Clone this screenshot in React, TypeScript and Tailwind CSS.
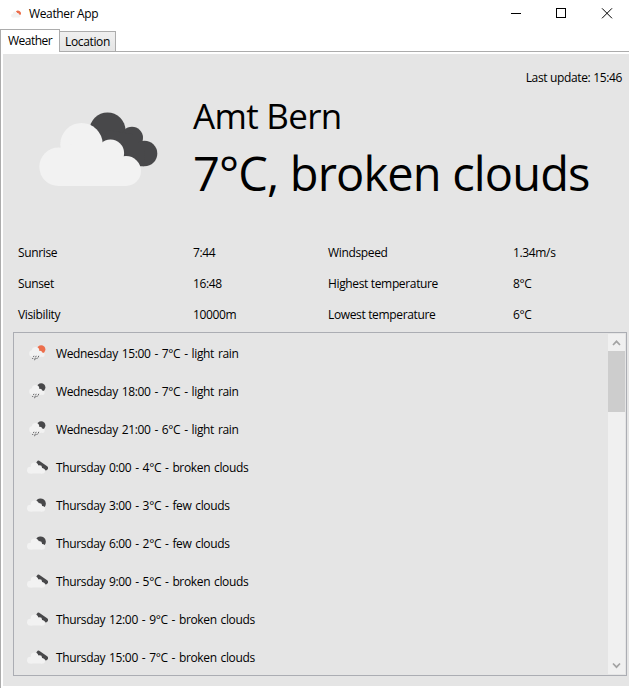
import type { ReactNode } from "react";

const LIGHT = "#f2f2f2";
const DARK = "#48484a";
const ORANGE = "#ec6e4c";

function LightCloud() {
  return (
    <g fill={LIGHT}>
      <circle cx="58.5" cy="166.8" r="19.2" />
      <circle cx="81.5" cy="144.2" r="21.2" />
      <circle cx="110.5" cy="153" r="13.6" />
      <circle cx="126" cy="171" r="15" />
      <path d="M58 186V150L81 140L110 150L126 160V186Z" />
    </g>
  );
}

function BrokenClouds({ className }: { className: string }) {
  return (
    <svg className={className} viewBox="39 111 119 76">
      <g fill={DARK}>
        <circle cx="107.5" cy="130.5" r="18" />
        <circle cx="132" cy="137.7" r="11" />
        <circle cx="144.5" cy="153.5" r="12.8" />
        <path d="M107 130L132 134L145 150L144 166.3H120L100 146Z" />
      </g>
      <LightCloud />
    </svg>
  );
}

function SmallBrokenClouds() {
  return (
    <svg className="h-[14px] w-[21px]" viewBox="39 111 119 76">
      <path d="M105 126L146 155" stroke={DARK} strokeWidth="25" strokeLinecap="round" />
      <LightCloud />
    </svg>
  );
}

function FewClouds({ className, color }: { className: string; color: string }) {
  return (
    <svg className={className} viewBox="39 111 119 76">
      <path d="M92 123A25 25 0 1 1 139 161L125 154L107 137Z" fill={color} />
      <LightCloud />
    </svg>
  );
}

function Rain({ color }: { color: string }) {
  return (
    <svg className="h-[17px] w-[17px]" viewBox="0 0 17 17">
      <circle cx="12.2" cy="4.5" r="4.2" fill={color} />
      <g fill={LIGHT}>
        <circle cx="3.5" cy="8.5" r="3.3" />
        <circle cx="6.6" cy="5.8" r="3.7" />
        <circle cx="11" cy="8" r="2.2" />
        <circle cx="13.5" cy="9.8" r="2.2" />
        <path d="M3 6.5H12V11.9H3Z" />
      </g>
      <path
        d="M5 10.8L4.4 12M7.2 10.8L6.7 12M9.8 10.8L9.2 12.4M4 13L3.4 14M6.4 12.7L5.6 15.2M8.3 12.8L7.7 14"
        stroke="#555557"
        strokeWidth="0.9"
      />
    </svg>
  );
}

const stats = [
  ["Sunrise", "7:44", "Windspeed", "1.34m/s"],
  ["Sunset", "16:48", "Highest temperature", "8°C"],
  ["Visibility", "10000m", "Lowest temperature", "6°C"],
];

const broken = <SmallBrokenClouds />;
const few = <FewClouds className="h-[14px] w-[21px]" color={DARK} />;

const forecast: [ReactNode, string][] = [
  [<Rain color={ORANGE} />, "Wednesday 15:00 - 7°C - light rain"],
  [<Rain color={DARK} />, "Wednesday 18:00 - 7°C - light rain"],
  [<Rain color={DARK} />, "Wednesday 21:00 - 6°C - light rain"],
  [broken, "Thursday 0:00 - 4°C - broken clouds"],
  [few, "Thursday 3:00 - 3°C - few clouds"],
  [few, "Thursday 6:00 - 2°C - few clouds"],
  [broken, "Thursday 9:00 - 5°C - broken clouds"],
  [broken, "Thursday 12:00 - 9°C - broken clouds"],
  [broken, "Thursday 15:00 - 7°C - broken clouds"],
];

export default function App() {
  return (
    <div className="flex h-[688px] w-[629px] flex-col overflow-hidden whitespace-nowrap bg-white font-['Open_Sans','Noto_Sans',sans-serif] text-[12px] leading-[16px] tracking-[-0.35px] text-black">
      <header className="flex h-[29px] shrink-0 items-center pb-[2px] pl-[11px]">
        <FewClouds className="h-[8px] w-[11px]" color={ORANGE} />
        <span className="ml-[7px] flex-1">Weather App</span>
        <svg className="h-[11px] w-[102px] shrink-0" viewBox="0 0 102 11" fill="none" stroke="#000">
          <path d="M0 5.5H10M45.5 .5H54.5V9.5H45.5Z" shapeRendering="crispEdges" />
          <path d="M91 .3L101 10.3M101 .3L91 10.3" />
        </svg>
        <div className="w-[16px] shrink-0" />
      </header>

      <nav className="flex h-[23px] shrink-0 items-end">
        <div className="h-[23px] w-[60px] border-x border-t border-[#acacac] pl-[7px] pt-[3px] tracking-[-0.5px]">Weather</div>
        <div className="h-[21px] w-[56px] border-y border-r border-[#acacac] bg-gradient-to-b from-[#f0f0f0] to-[#e5e5e5] pl-[5px] pt-[2px]">
          Location
        </div>
        <div className="h-px flex-1 bg-[#acacac]" />
      </nav>

      <main className="flex flex-1 flex-col border-l border-[#acacac] pb-[2px] pl-[2px] pt-[2px]">
        <div className="flex flex-1 flex-col bg-[#e5e5e5] pl-[10px]">
          <div className="flex h-[46px] shrink-0 justify-end pr-[7px] pt-[16px]">Last update: 15:46</div>
          <section className="flex h-[137px] shrink-0">
            <div className="w-[180px] shrink-0 pl-[26px] pt-[11px]">
              <BrokenClouds className="h-[76px] w-[119px]" />
            </div>
            <div>
              <h1 className="h-[48px] text-[35px] leading-[32px] tracking-[-0.7px]">Amt Bern</h1>
              <p className="text-[47px] leading-[50px] tracking-[-0.85px]">7°C, broken clouds</p>
            </div>
          </section>

          <section className="grid h-[95px] shrink-0 grid-cols-[175px_135px_185px_1fr] grid-rows-[31px_31px_31px] items-center pl-[5px]">
            {stats.flat().map((s) => (
              <span key={s}>{s}</span>
            ))}
          </section>

          <section className="flex h-[344px] w-[614px] shrink-0 border border-[#abadb3] p-px">
            <div className="flex-1 [word-spacing:1.1px]">
              {forecast.map(([icon, label]) => (
                <div key={label} className="flex h-[38px] items-center pl-[12px]">
                  <div className="flex w-[21px] justify-center">{icon}</div>
                  <span className="ml-[8px] pt-[2px]">{label}</span>
                </div>
              ))}
            </div>
            <div className="flex w-[17px] flex-col bg-[#f0f0f0]">
              <svg className="h-[17px] w-[17px]" viewBox="0 0 17 17" fill="none" stroke="#a3a3a3" strokeWidth="1.7">
                <path d="M5 11L8.5 7.3L12 11" />
              </svg>
              <div className="h-[61px] bg-[#cdcdcd]" />
              <div className="flex-1" />
              <svg className="h-[17px] w-[17px]" viewBox="0 0 17 17" fill="none" stroke="#a3a3a3" strokeWidth="1.7">
                <path d="M5 6.5L8.5 10.2L12 6.5" />
              </svg>
            </div>
          </section>
        </div>
      </main>
    </div>
  );
}
